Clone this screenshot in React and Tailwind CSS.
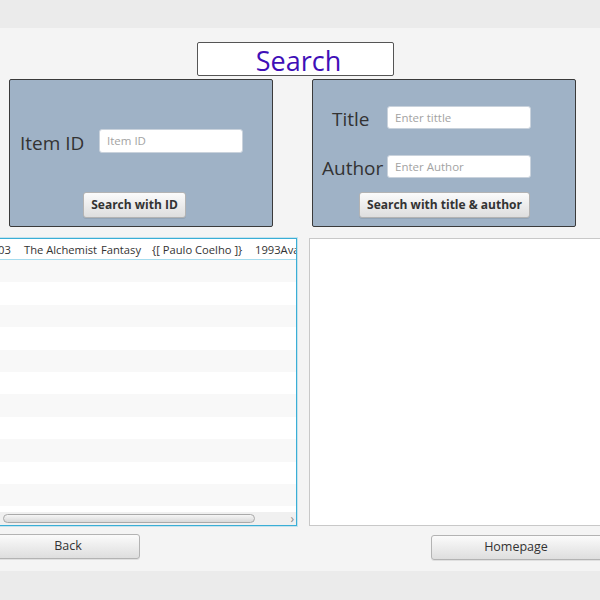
const font = { fontFamily: '"Open Sans", "Noto Sans", sans-serif' };

function FxButton({ children, className = "" }) {
  return (
    <button
      className={
        "shrink-0 flex items-center justify-center rounded-[3px] border border-[#b3b3b3] bg-gradient-to-b from-[#fbfbfb] to-[#dedede] text-[#333] shadow-[0_1px_0_rgba(0,0,0,0.08)] " +
        className
      }
    >
      {children}
    </button>
  );
}

function FxInput({ placeholder, className = "" }) {
  return (
    <div
      className={
        "shrink-0 flex items-center rounded-[3px] border border-[#c9d2dc] bg-white px-[7px] text-[11.5px] text-[#a3a3a3] " +
        className
      }
    >
      {placeholder}
    </div>
  );
}

export default function App() {
  const rows = Array.from({ length: 12 });

  return (
    <div className="w-[600px] h-[600px] overflow-hidden flex flex-col bg-[#ebebeb]" style={font}>
      {/* TOP BAND */}
      <div className="h-[28px] shrink-0 bg-[#ebebeb]" />

      {/* MAIN */}
      <div className="h-[543px] shrink-0 bg-[#f4f4f4] flex flex-col">
        {/* TITLE */}
        <div className="mt-[14px] ml-[197px] w-[197px] h-[34px] rounded-[2px] border border-[#555] bg-white flex items-end justify-center">
          <span className="text-[27px] leading-none pb-[1px] pl-[6px] text-[#3f0fb7]">Search</span>
        </div>

        {/* PANELS */}
        <div className="mt-[3px] flex">
          <div className="shrink-0 ml-[9px] w-[264px] h-[148px] rounded-[2px] border border-[#3a3a3a] bg-[#9fb2c6] flex flex-col">
            <div className="mt-[49px] ml-[10px] flex items-center">
              <span className="w-[79px] text-[19px] leading-none text-[#333] pt-[4px]">Item ID</span>
              <FxInput placeholder="Item ID" className="w-[144px] h-[24px]" />
            </div>
            <FxButton className="mt-[39px] ml-[73px] w-[103px] h-[26px] text-[12px] font-bold">
              Search with ID
            </FxButton>
          </div>

          <div className="shrink-0 ml-[39px] w-[264px] h-[148px] rounded-[2px] border border-[#3a3a3a] bg-[#9fb2c6] flex flex-col">
            <div className="mt-[26px] h-[23px] flex items-center">
              <span className="ml-[19px] w-[55px] text-[19px] leading-none text-[#333] pt-[4px]">Title</span>
              <FxInput placeholder="Enter tittle" className="w-[144px] h-[23px]" />
            </div>
            <div className="mt-[26px] h-[23px] flex items-center">
              <span className="ml-[9px] w-[65px] text-[19px] leading-none text-[#333] pt-[4px]">Author</span>
              <FxInput placeholder="Enter Author" className="w-[144px] h-[23px]" />
            </div>
            <FxButton className="mt-[14px] ml-[46px] w-[171px] h-[26px] text-[12px] font-bold">
              Search with title &amp; author
            </FxButton>
          </div>
        </div>

        {/* LISTS */}
        <div className="mt-[11px] flex">
          <div className="shrink-0 ml-[-4px] w-[301px] h-[288px] border border-[#3aaed6] shadow-[0_0_0_1px_rgba(58,174,214,0.25)] bg-white flex flex-col overflow-hidden">
            <div className="h-[21px] shrink-0 border-b border-[#a6dcee] flex items-center pt-[3px] text-[11.2px] text-[#333] whitespace-nowrap overflow-hidden">
              <span className="shrink-0 ml-[1px] w-[26px]">03</span>
              <span className="shrink-0 w-[77px]">The Alchemist</span>
              <span className="shrink-0 w-[51px]">Fantasy</span>
              <span className="shrink-0 w-[103px]">{"{[ Paulo Coelho  ]}"}</span>
              <span className="shrink-0">1993Available</span>
            </div>
            <div className="flex-1 flex flex-col overflow-hidden">
              {rows.map((_, i) => (
                <div
                  key={i}
                  className={"h-[22.4px] shrink-0 " + (i % 2 === 0 ? "bg-[#f8f8f8]" : "bg-white")}
                />
              ))}
            </div>
            <div className="h-[13px] shrink-0 bg-[#f0f0f0] flex items-center">
              <div className="ml-[6px] w-[252px] h-[9px] rounded-full border border-[#a9a9a9] bg-gradient-to-b from-[#f6f6f6] to-[#d9d9d9]" />
              <span className="ml-auto mr-[2px] text-[12px] leading-none text-[#888]">›</span>
            </div>
          </div>

          <div className="shrink-0 ml-[12px] w-[300px] h-[288px] border border-[#c8c8c8] bg-white" />
        </div>

        {/* BUTTONS */}
        <div className="mt-[8px] flex">
          <FxButton className="ml-[-4px] w-[144px] h-[25px] text-[12.5px]">Back</FxButton>
          <FxButton className="ml-[291px] mt-[1px] w-[174px] h-[25px] text-[12.5px] pr-[4px]">Homepage</FxButton>
        </div>
      </div>

      {/* BOTTOM BAND */}
      <div className="flex-1 bg-[#ebebeb]" />
    </div>
  );
}
